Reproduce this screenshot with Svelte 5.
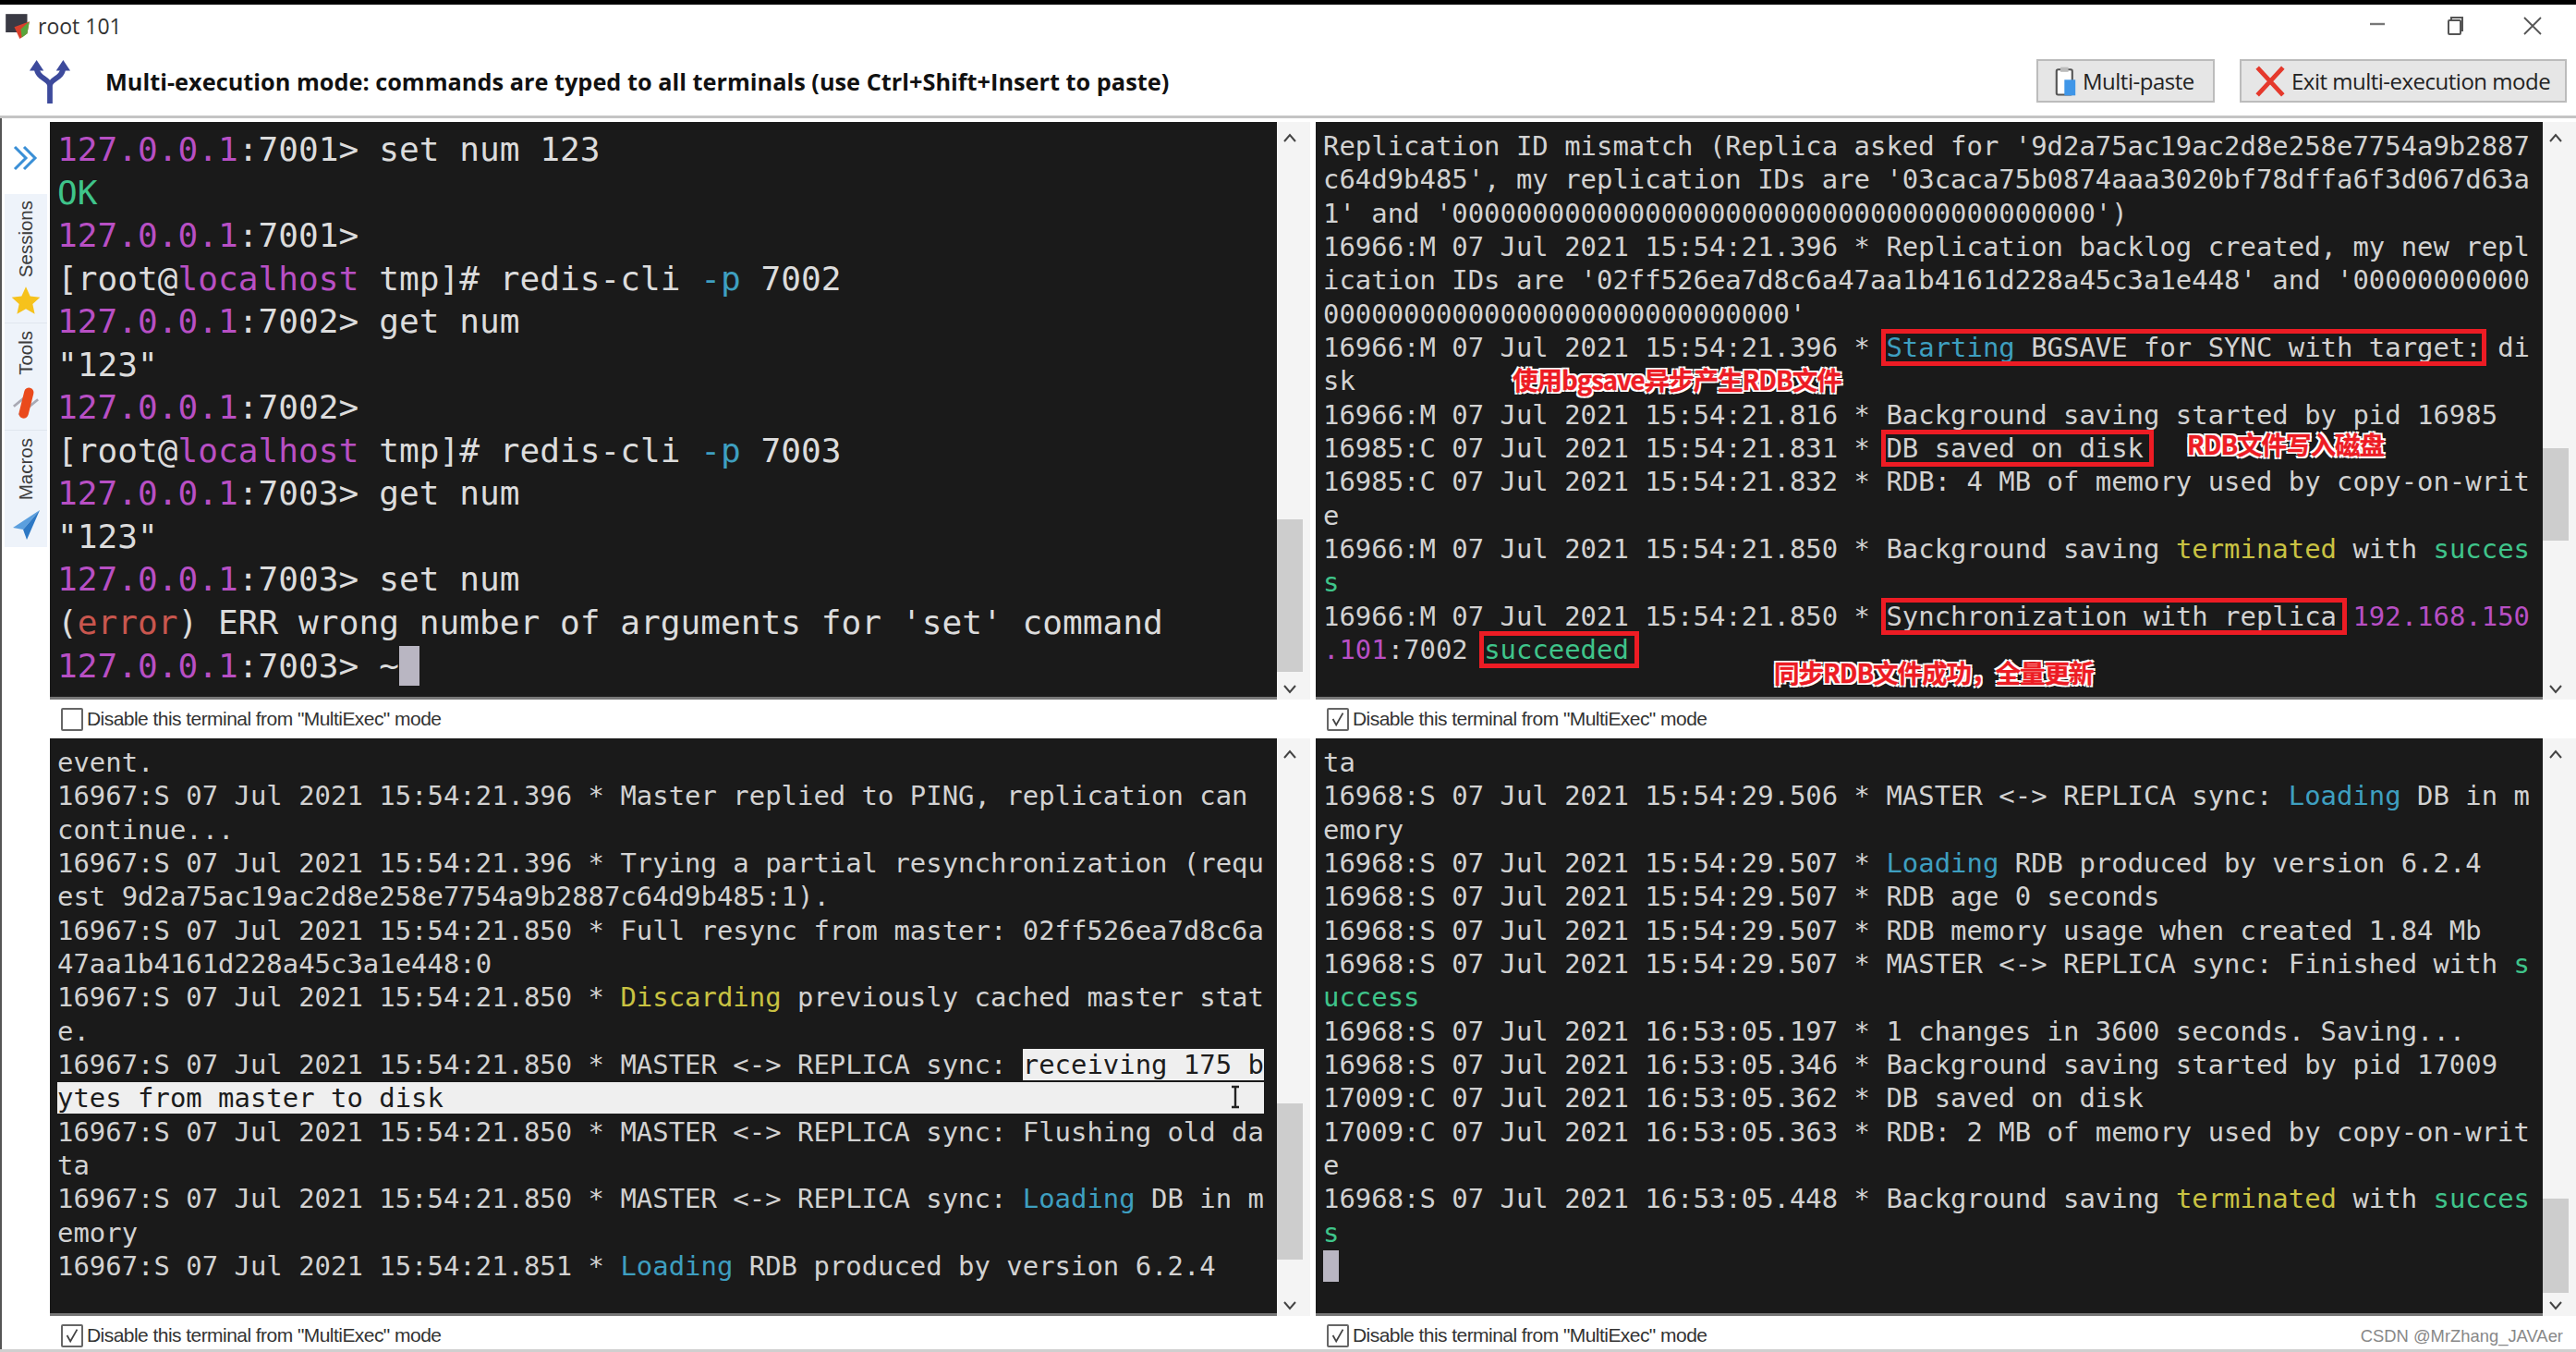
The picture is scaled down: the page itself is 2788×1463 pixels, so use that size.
<script>
  // each line is a list of segments: 'text', ['text', 'class'] or { box: [...], wide }
  const topLeft = [
    [['127.0.0.1', 'mag'], ':7001> set num 123'],
    [['OK', 'grn']],
    [['127.0.0.1', 'mag'], ':7001>'],
    ['[root@', ['localhost', 'mag'], ' tmp]# redis-cli ', ['-p', 'cyn'], ' 7002'],
    [['127.0.0.1', 'mag'], ':7002> get num'],
    ['"123"'],
    [['127.0.0.1', 'mag'], ':7002>'],
    ['[root@', ['localhost', 'mag'], ' tmp]# redis-cli ', ['-p', 'cyn'], ' 7003'],
    [['127.0.0.1', 'mag'], ':7003> get num'],
    ['"123"'],
    [['127.0.0.1', 'mag'], ':7003> set num'],
    ['(', ['error', 'red'], ") ERR wrong number of arguments for 'set' command"],
    [['127.0.0.1', 'mag'], ':7003> ~', [' ', 'cursor']]
  ];

  const topRight = [
    ["Replication ID mismatch (Replica asked for '9d2a75ac19ac2d8e258e7754a9b2887"],
    ["c64d9b485', my replication IDs are '03caca75b0874aaa3020bf78dffa6f3d067d63a"],
    ["1' and '0000000000000000000000000000000000000000')"],
    ['16966:M 07 Jul 2021 15:54:21.396 * Replication backlog created, my new repl'],
    ["ication IDs are '02ff526ea7d8c6a47aa1b4161d228a45c3a1e448' and '00000000000"],
    ["00000000000000000000000000000'"],
    ['16966:M 07 Jul 2021 15:54:21.396 * ', { box: [['Starting', 'cyn'], ' BGSAVE for SYNC with target:'] }, ' di'],
    ['sk'],
    ['16966:M 07 Jul 2021 15:54:21.816 * Background saving started by pid 16985'],
    ['16985:C 07 Jul 2021 15:54:21.831 * ', { box: ['DB saved on disk'], wide: true }],
    ['16985:C 07 Jul 2021 15:54:21.832 * RDB: 4 MB of memory used by copy-on-writ'],
    ['e'],
    ['16966:M 07 Jul 2021 15:54:21.850 * Background saving ', ['terminated', 'yel'], ' with ', ['succes', 'grn']],
    [['s', 'grn']],
    ['16966:M 07 Jul 2021 15:54:21.850 * ', { box: ['Synchronization with replica'], wide: true }, ' ', ['192.168.150', 'mag']],
    [['.101', 'mag'], ':7002 ', { box: [['succeeded', 'grn']], wide: true }]
  ];

  const bottomLeft = [
    ['event.'],
    ['16967:S 07 Jul 2021 15:54:21.396 * Master replied to PING, replication can'],
    ['continue...'],
    ['16967:S 07 Jul 2021 15:54:21.396 * Trying a partial resynchronization (requ'],
    ['est 9d2a75ac19ac2d8e258e7754a9b2887c64d9b485:1).'],
    ['16967:S 07 Jul 2021 15:54:21.850 * Full resync from master: 02ff526ea7d8c6a'],
    ['47aa1b4161d228a45c3a1e448:0'],
    ['16967:S 07 Jul 2021 15:54:21.850 * ', ['Discarding', 'yel'], ' previously cached master stat'],
    ['e.'],
    ['16967:S 07 Jul 2021 15:54:21.850 * MASTER <-> REPLICA sync: ', ['receiving 175 b', 'sel']],
    [['ytes from master to disk'.padEnd(75), 'sel']],
    ['16967:S 07 Jul 2021 15:54:21.850 * MASTER <-> REPLICA sync: Flushing old da'],
    ['ta'],
    ['16967:S 07 Jul 2021 15:54:21.850 * MASTER <-> REPLICA sync: ', ['Loading', 'cyn'], ' DB in m'],
    ['emory'],
    ['16967:S 07 Jul 2021 15:54:21.851 * ', ['Loading', 'cyn'], ' RDB produced by version 6.2.4']
  ];

  const bottomRight = [
    ['ta'],
    ['16968:S 07 Jul 2021 15:54:29.506 * MASTER <-> REPLICA sync: ', ['Loading', 'cyn'], ' DB in m'],
    ['emory'],
    ['16968:S 07 Jul 2021 15:54:29.507 * ', ['Loading', 'cyn'], ' RDB produced by version 6.2.4'],
    ['16968:S 07 Jul 2021 15:54:29.507 * RDB age 0 seconds'],
    ['16968:S 07 Jul 2021 15:54:29.507 * RDB memory usage when created 1.84 Mb'],
    ['16968:S 07 Jul 2021 15:54:29.507 * MASTER <-> REPLICA sync: Finished with ', ['s', 'grn']],
    [['uccess', 'grn']],
    ['16968:S 07 Jul 2021 16:53:05.197 * 1 changes in 3600 seconds. Saving...'],
    ['16968:S 07 Jul 2021 16:53:05.346 * Background saving started by pid 17009'],
    ['17009:C 07 Jul 2021 16:53:05.362 * DB saved on disk'],
    ['17009:C 07 Jul 2021 16:53:05.363 * RDB: 2 MB of memory used by copy-on-writ'],
    ['e'],
    ['16968:S 07 Jul 2021 16:53:05.448 * Background saving ', ['terminated', 'yel'], ' with ', ['succes', 'grn']],
    [['s', 'grn']],
    [[' ', 'cursor']]
  ];

  const panes = [
    { lines: topLeft, big: true, checked: false, thumb: 'thumb-tl' },
    { lines: topRight, checked: true, thumb: 'thumb-tr', notes: true },
    { lines: bottomLeft, checked: true, thumb: 'thumb-bl', ibeam: true },
    { lines: bottomRight, checked: true, thumb: 'thumb-br' }
  ];

  const seg = (s) => (typeof s === 'string' ? [s, ''] : s);
</script>

{#snippet segments(list)}{#each list as s}{#if s.box}<span class="box" class:wide={s.wide}>{@render segments(s.box)}</span>{:else}{@const [text, cls] = seg(s)}<span class={cls}>{text}</span>{/if}{/each}{/snippet}

<div class="window">
  <div class="titlebar">
    <svg class="app-icon" viewBox="0 0 24 24" width="28" height="28">
      <rect x="1" y="1" width="20" height="17" fill="#3a3a44" />
      <path d="M9 13 L23 8 L21 19 L14 24 Z" fill="#d9402c" />
      <path d="M15 15 L23 8 L21 19 L16 23 Z" fill="#5aa53c" />
    </svg>
    <span class="title">root 101</span>
    <div class="winbtns">
      <svg viewBox="0 0 24 24" width="24" height="24"><path d="M4 10 H20" stroke="#777" stroke-width="2.4" /></svg>
      <svg viewBox="0 0 24 24" width="24" height="24" fill="none" stroke="#555" stroke-width="2"><rect x="5" y="6" width="13" height="15" rx="1" /><path d="M8 6 V3 H20 V17 H18" /></svg>
      <svg viewBox="0 0 24 24" width="24" height="24" fill="none" stroke="#555" stroke-width="1.8"><path d="M3 3 L21 21 M21 3 L3 21" /></svg>
    </div>
  </div>

  <div class="toolbar">
    <svg class="fork" viewBox="0 0 48 50" width="46" height="48" fill="none" stroke="#3d4a9c" stroke-width="6">
      <path d="M24 50 V30 C24 22 9 22 9 9 M24 30 C24 22 39 22 39 9" />
      <path d="M1 13 L9 1 L17 13 Z M31 13 L39 1 L47 13 Z" fill="#3d4a9c" stroke="none" />
    </svg>
    <span class="banner">Multi-execution mode: commands are typed to all terminals (use Ctrl+Shift+Insert to paste)</span>
    <button class="btn paste">
      <svg viewBox="0 0 28 40" width="24" height="34">
        <rect x="2" y="5" width="20" height="32" rx="2" fill="#fff" stroke="#555" stroke-width="2.5" />
        <rect x="7" y="2" width="10" height="6" fill="#bbb" />
        <rect x="12" y="18" width="14" height="20" fill="#3f96e8" />
      </svg>
      Multi-paste
    </button>
    <button class="btn exit">
      <svg viewBox="0 0 32 32" width="34" height="34"><path d="M3 2 L29 30 M29 2 L3 30" stroke="#e5392c" stroke-width="4.5" /></svg>
      Exit multi-execution mode
    </button>
  </div>

  <div class="body">
    <aside class="sidebar">
      <svg class="chev" viewBox="0 0 32 32" width="32" height="32" fill="none" stroke="#3a8fd6" stroke-width="3">
        <path d="M4 4 L16 16 L4 28 M14 4 L26 16 L14 28" />
      </svg>
      <div class="tabs">
        <div class="group">
          <span class="tab">Sessions</span>
          <svg viewBox="0 0 24 24" width="32" height="32"><path d="M12 1 L15.5 8.6 L23.5 9.5 L17.5 15 L19.2 23 L12 18.9 L4.8 23 L6.5 15 L.5 9.5 L8.5 8.6 Z" fill="#f6c21c" /></svg>
        </div>
        <div class="group">
          <span class="tab">Tools</span>
          <svg viewBox="0 0 32 44" width="30" height="42">
            <path d="M2 26 L24 8" stroke="#a9a9b4" stroke-width="3" />
            <path d="M8 36 L30 18" stroke="#a9a9b4" stroke-width="3" />
            <rect x="11" y="4" width="11" height="36" rx="5.5" fill="#ea4a1c" transform="rotate(14 16 22)" />
          </svg>
        </div>
        <div class="group">
          <span class="tab">Macros</span>
          <svg viewBox="0 0 32 36" width="32" height="36">
            <path d="M31 2 L2 21 L13 23 Z" fill="#5b9fde" />
            <path d="M31 2 L13 23 L17 34 Z" fill="#2d78c4" />
          </svg>
        </div>
      </div>
    </aside>

    <div class="grid">
      {#each panes as pane}
        <section class="pane">
          <div class="term-row">
            <div class="term" class:big={pane.big}>
              {#each pane.lines as line}
                <div class="line">{@render segments(line)}</div>
              {/each}
              {#if pane.notes}
                <span class="note n1">使用bgsave异步产生RDB文件</span>
                <span class="note n2">RDB文件写入磁盘</span>
                <span class="note n3">同步RDB文件成功，全量更新</span>
              {/if}
              {#if pane.ibeam}
                <svg class="ibeam" viewBox="0 0 12 26" width="12" height="26" fill="none" stroke="#222" stroke-width="2.4"><path d="M2 2 H10 M6 2 V24 M2 24 H10" /></svg>
              {/if}
            </div>
            <div class="scrollbar">
              <svg viewBox="0 0 14 10" width="14" height="10" fill="none" stroke="#444" stroke-width="2"><path d="M1 9 L7 2 L13 9" /></svg>
              <div class="track"><div class="thumb {pane.thumb}"></div></div>
              <svg viewBox="0 0 14 10" width="14" height="10" fill="none" stroke="#444" stroke-width="2"><path d="M1 1 L7 8 L13 1" /></svg>
            </div>
          </div>
          <label class="disable">
            <span class="check">
              {#if pane.checked}
                <svg viewBox="0 0 22 22" width="20" height="20" fill="none" stroke="#444" stroke-width="2"><path d="M5 11 L9 18 L17 4" /></svg>
              {/if}
            </span>
            Disable this terminal from "MultiExec" mode
          </label>
        </section>
      {/each}
    </div>
  </div>

  <div class="watermark">CSDN @MrZhang_JAVAer</div>
</div>

<style>
  :global(body) {
    margin: 0;
    background: #fff;
  }

  .window {
    position: relative;
    width: 2788px;
    height: 1463px;
    overflow: hidden;
    background: #fff;
    border-top: 5px solid #000;
    border-bottom: 3px solid #cfcfcf;
    box-sizing: border-box;
    font-family: 'Liberation Sans', sans-serif;
  }

  .titlebar {
    display: flex;
    align-items: center;
    gap: 8px;
    height: 45px;
    padding: 0 0 0 5px;
  }

  .title {
    font-family: 'Open Sans', sans-serif;
    font-size: 23px;
    color: #333;
  }

  .winbtns {
    margin-left: auto;
    display: flex;
    gap: 60px;
    padding-right: 35px;
  }

  .toolbar {
    display: flex;
    align-items: center;
    height: 78px;
    border-bottom: 3px solid #c4c4c4;
    padding-left: 31px;
    box-sizing: border-box;
  }

  .fork {
    margin-right: 37px;
  }

  .banner {
    font-family: 'Open Sans', sans-serif;
    font-weight: 700;
    font-size: 25.32px;
    color: #111;
    flex: 1;
  }

  .btn {
    display: flex;
    align-items: center;
    gap: 6px;
    height: 47px;
    border: 2px solid #bcbcbc;
    background: #e6e6e6;
    font-family: 'Open Sans', sans-serif;
    font-size: 24px;
    letter-spacing: -0.5px;
    color: #222;
    padding: 0;
    box-sizing: border-box;
  }

  .paste {
    width: 193px;
    padding-left: 18px;
    margin-right: 27px;
  }

  .exit {
    width: 354px;
    padding-left: 14px;
    margin-right: 10px;
  }

  .body {
    display: flex;
    height: 1332px;
    overflow: hidden;
  }

  .sidebar {
    width: 54px;
    flex: none;
    box-sizing: border-box;
    border-left: 2px solid #555;
    display: flex;
    flex-direction: column;
    align-items: center;
    padding-top: 27px;
  }

  .chev {
    margin-bottom: 23px;
  }

  .tabs {
    width: 46px;
    display: flex;
    flex-direction: column;
    background: #eef3fa;
    padding: 7px 0 6px;
  }

  .group {
    display: flex;
    flex-direction: column;
    align-items: center;
    gap: 9px;
    padding-bottom: 8px;
    margin-bottom: 8px;
    border-bottom: 1px solid #e0e6ee;
  }

  .group:last-child {
    border-bottom: 0;
    margin-bottom: 0;
    padding-bottom: 0;
  }

  .tab {
    writing-mode: vertical-rl;
    transform: rotate(180deg);
    font-size: 20.5px;
    color: #3c3c3c;
  }

  .grid {
    flex: 1;
    display: grid;
    grid-template-columns: 1370px 1364px;
    grid-template-rows: 667px 667px;
    padding-top: 4px;
  }

  .pane {
    display: flex;
    flex-direction: column;
  }

  .term-row {
    display: flex;
    height: 625px;
    flex: none;
  }

  .term {
    position: relative;
    width: 1328px;
    flex: none;
    box-sizing: border-box;
    background: #1a1a1a;
    border-bottom: 3px solid #777;
    padding: 8px 0 0 8px;
    font-family: 'DejaVu Sans Mono', monospace;
    font-size: 28.93px;
    line-height: 36.35px;
    color: #d2d2d2;
    overflow: hidden;
  }

  .term.big {
    font-size: 36.15px;
    line-height: 46.55px;
    color: #dcdcdc;
    padding: 7px 0 0 8px;
  }

  .line {
    white-space: pre;
    height: 1lh;
  }

  .mag { color: #b84fc4; }
  .grn { color: #3fc48a; }
  .cyn { color: #3e9fc0; }
  .yel { color: #c9c242; }
  .red { color: #c9564e; }

  .box {
    outline: 5px solid #ed1c24;
    outline-offset: -2px;
    padding: 0 2px;
    margin: 0 -2px;
  }

  .box.wide {
    padding-right: 8px;
    margin-right: -8px;
  }

  .sel {
    background: #efefef;
    color: #1c1c1c;
  }

  .cursor {
    background: #b9b6c2;
  }

  .note {
    position: absolute;
    font-family: 'Noto Sans CJK SC', sans-serif;
    font-weight: 700;
    color: #ed1c24;
    font-size: 27.5px;
    line-height: 1;
    letter-spacing: -1px;
    -webkit-text-stroke: 0.4px #ed1c24;
    text-shadow: 2px 2px 0 #fff, -2px -2px 0 #fff, 2px -2px 0 #fff, -2px 2px 0 #fff;
  }

  .n1 { left: 213px; top: 265px; }
  .n2 { left: 943px; top: 335px; }
  .n3 { left: 496px; top: 582px; }

  .ibeam {
    position: absolute;
    right: 39px;
    top: 375px;
  }

  .scrollbar {
    width: 36px;
    flex: none;
    display: flex;
    flex-direction: column;
    align-items: center;
    padding: 12px 8px 6px 0;
    box-sizing: border-box;
    gap: 6px;
    background: #f4f4f4;
  }

  .track {
    flex: 1;
    width: 100%;
    display: flex;
    flex-direction: column;
    justify-content: flex-end;
  }

  .thumb {
    background: #cdcdcd;
    width: 100%;
  }

  .thumb-tl { height: 165px; margin-bottom: 8px; }
  .thumb-tr { height: 100px; margin-bottom: 150px; }
  .thumb-bl { height: 169px; margin-bottom: 39px; }
  .thumb-br { height: 102px; margin-bottom: 3px; }

  .disable {
    display: flex;
    align-items: center;
    gap: 4px;
    height: 42px;
    padding-left: 12px;
    font-size: 21px;
    letter-spacing: -0.55px;
    color: #333;
  }

  .check {
    width: 20px;
    height: 21px;
    border: 2px solid #666;
    border-radius: 2px;
    display: block;
    flex: none;
  }

  .watermark {
    position: absolute;
    right: 14px;
    bottom: 3px;
    padding-left: 14px;
    background: #fff;
    font-size: 18.4px;
    color: #888;
  }
</style>
